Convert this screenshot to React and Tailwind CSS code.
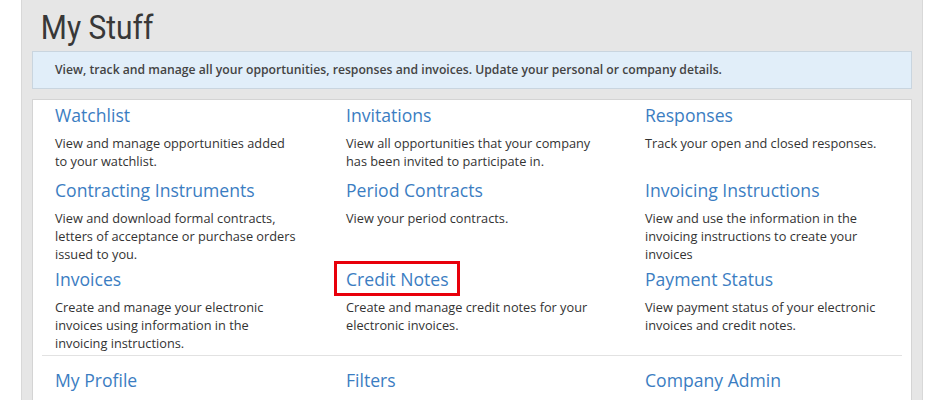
import React from 'react'

const rows = [
  {
    height: 'h-[75px]',
    items: [
      { title: 'Watchlist', text: 'View and manage opportunities added to your watchlist.' },
      { title: 'Invitations', text: 'View all opportunities that your company has been invited to participate in.' },
      { title: 'Responses', text: 'Track your open and closed responses.' },
    ],
  },
  {
    height: 'h-[89px]',
    items: [
      { title: 'Contracting Instruments', text: 'View and download formal contracts, letters of acceptance or purchase orders issued to you.' },
      { title: 'Period Contracts', text: 'View your period contracts.' },
      { title: 'Invoicing Instructions', text: 'View and use the information in the invoicing instructions to create your invoices' },
    ],
  },
  {
    height: 'h-[87px]',
    items: [
      { title: 'Invoices', text: 'Create and manage your electronic invoices using information in the invoicing instructions.' },
      { title: 'Credit Notes', text: 'Create and manage credit notes for your electronic invoices.', marked: true },
      { title: 'Payment Status', text: 'View payment status of your electronic invoices and credit notes.' },
    ],
  },
]

const bottom = ['My Profile', 'Filters', 'Company Admin']

// text widths per column so the lines break like the original page
const widths = ['w-[243px]', 'w-[252px]', 'w-[236px]']

function Tile({ title, text, marked, width }) {
  return (
    <div>
      <h2 className="relative inline-block text-[17.6px] leading-[22px] text-[#3b7dc2]">
        {title}
        {marked && (
          <span className="absolute -left-[12px] -top-[7px] w-[126px] h-[35px] border-[3px] border-[#e8000b]" />
        )}
      </h2>
      <p className={`mt-[6px] ${width} text-[12.75px] leading-[18px] text-[#333]`}>{text}</p>
    </div>
  )
}

export default function App() {
  return (
    <div className="bg-white h-[400px] overflow-hidden pl-[21px] font-['Open_Sans',sans-serif]">
      <div className="w-[902px] h-[400px] bg-[#e6e6e6] border-x border-[#d8d8d8] px-[10px]">
        <h1 className="pt-[7px] pl-[10px] h-[51px] text-[34px] leading-[40px] text-[#383838] font-['Roboto',sans-serif] origin-left scale-x-[0.88]">
          My Stuff
        </h1>
        <div className="h-[38px] flex items-center px-[22px] bg-[#e1eef9] border border-[#c9d5df] text-[12.2px] font-semibold text-[#444]">
          View, track and manage all your opportunities, responses and invoices. Update your personal or company details.
        </div>
        <div className="mt-[10px] bg-white border border-[#d4d4d4] h-[320px]">
          <div className="px-[22px] pt-[4px]">
            {rows.map((row, i) => (
              <div key={i} className={`grid grid-cols-[291px_299px_1fr] ${row.height}`}>
                {row.items.map((item, j) => (
                  <Tile key={item.title} width={widths[j]} {...item} />
                ))}
              </div>
            ))}
          </div>
          <div className="mx-[9px] border-t border-[#e2e2e2]" />
          <div className="px-[22px] pt-[13px] grid grid-cols-[291px_299px_1fr]">
            {bottom.map(t => (
              <h2 key={t} className="text-[17.6px] leading-[22px] text-[#3b7dc2]">{t}</h2>
            ))}
          </div>
        </div>
      </div>
    </div>
  )
}
